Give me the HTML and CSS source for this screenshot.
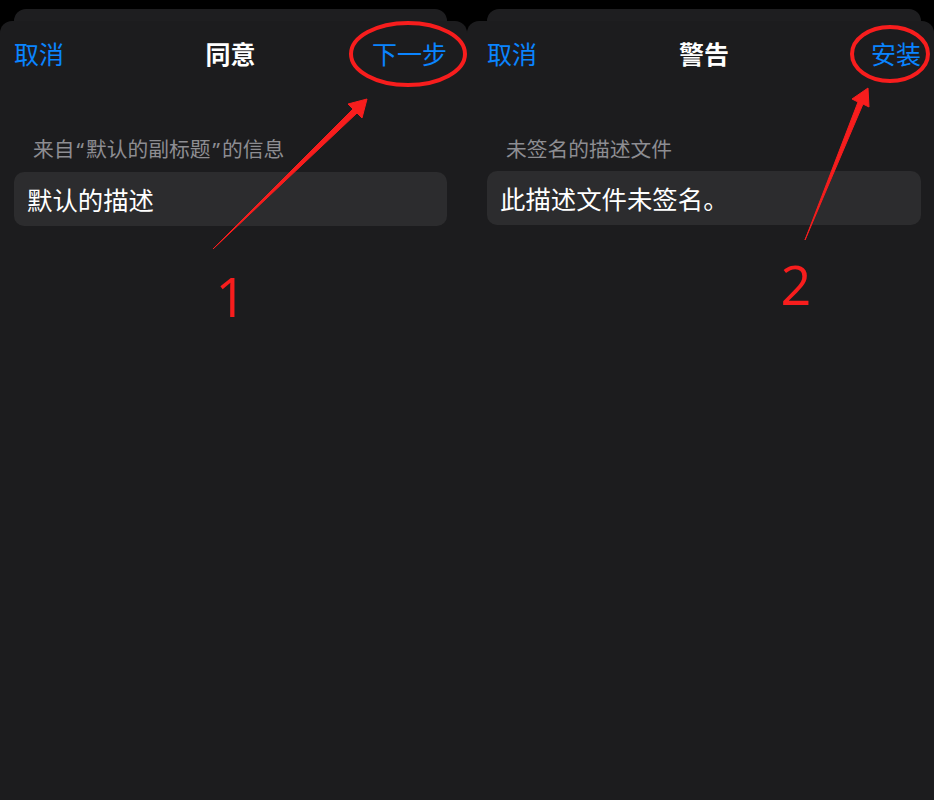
FILE: index.html
```html
<!DOCTYPE html>
<html lang="zh-CN">
<head>
  <meta charset="UTF-8" />
  <meta name="viewport" content="width=device-width, initial-scale=1.0" />
  <title>描述文件安装</title>
  <link rel="stylesheet" href="styles.css">
</head>
<body>
  <div class="screens">
    <!-- step 1: consent -->
    <div class="screen screen-left">
      <div class="sheet-back"></div>
      <div class="sheet">
        <div class="nav">
          <span class="nav-btn">取消</span>
          <span class="nav-title">同意</span>
          <span class="nav-btn nav-right">下一步</span>
        </div>
        <div class="group-header">来自<span class="q">“</span>默认的副标题<span class="q">”</span>的信息</div>
        <div class="cell">默认的描述</div>
      </div>
    </div>

    <!-- step 2: warning -->
    <div class="screen screen-right">
      <div class="sheet-back"></div>
      <div class="sheet">
        <div class="nav">
          <span class="nav-btn">取消</span>
          <span class="nav-title">警告</span>
          <span class="nav-btn nav-right">安装</span>
        </div>
        <div class="group-header">未签名的描述文件</div>
        <div class="cell">此描述文件未签名。</div>
      </div>
    </div>
  </div>

  <!-- red markup drawn over both screens -->
  <svg class="marks" width="934" height="800" viewBox="0 0 934 800">
    <ellipse cx="408" cy="54" rx="57" ry="31" />
    <polygon points="213,249 357,113 362,118 367,99 348,104 353,109" />
    <text x="231" y="317">1</text>

    <ellipse cx="890" cy="54" rx="38" ry="27" />
    <polygon points="805,240 863,104 869,107 868,88 852,99 858,102" />
    <text x="796" y="305">2</text>
  </svg>
</body>
</html>
```

FILE: styles.css
```css
/* Base */
* {
  margin: 0;
  padding: 0;
  box-sizing: border-box;
}

body {
  position: relative;
  width: 934px;
  height: 800px;
  overflow: hidden;
  background: #000;
  font-family: "PingFang SC", "Noto Sans CJK SC", sans-serif;
}

/* Two screens side by side */
.screens {
  display: flex;
  height: 100%;
}

.screen {
  display: flex;
  flex-direction: column;
  width: 467px;
  padding-top: 9px;
}

.screen-left {
  --inset-l: 14px;
  --inset-r: 20px;
}

.screen-right {
  --inset-l: 20px;
  --inset-r: 13px;
}

/* Sheet peeking out behind the modal */
.sheet-back {
  height: 12px;
  margin: 0 var(--inset-r) 0 var(--inset-l);
  background: #1e1e20;
  border-radius: 12px 12px 0 0;
}

.sheet {
  flex: 1;
  padding: 0 var(--inset-r) 0 var(--inset-l);
  background: #1c1c1e;
  border-radius: 12px 12px 0 0;
}

/* Navigation bar */
.nav {
  display: grid;
  grid-template-columns: 1fr auto 1fr;
  align-items: center;
  height: 64px;
  font-size: 25px;
  line-height: 64px;
}

.nav-btn {
  color: #0a84ff;
  justify-self: start;
}

.nav-right {
  justify-self: end;
}

.nav-title {
  color: #fff;
  font-weight: 700;
}

/* Grouped list */
.group-header {
  margin-top: 49px;
  padding-left: 19px;
  color: #8d8d92;
  font-size: 20.75px;
  line-height: 28px;
}

/* narrow latin quotes, as the system font sets them */
.group-header .q {
  font-family: "Noto Sans", sans-serif;
  padding: 0 2px;
}

.cell {
  display: flex;
  align-items: center;
  height: 54px;
  margin-top: 9px;
  padding-left: 13px;
  background: #2c2c2e;
  border-radius: 10px;
  color: #fff;
  font-size: 25.4px;
}

/* Markup overlay */
.marks {
  position: absolute;
  top: 0;
  left: 0;
  pointer-events: none;
}

.marks ellipse {
  fill: none;
  stroke: #f71d1d;
  stroke-width: 4;
}

.marks polygon {
  fill: #f71d1d;
  stroke: #f71d1d;
  stroke-width: 1;
  stroke-linejoin: round;
}

.marks text {
  fill: #f71d1d;
  font-family: "Open Sans", "Noto Sans", sans-serif;
  font-size: 54px;
  text-anchor: middle;
}
```
